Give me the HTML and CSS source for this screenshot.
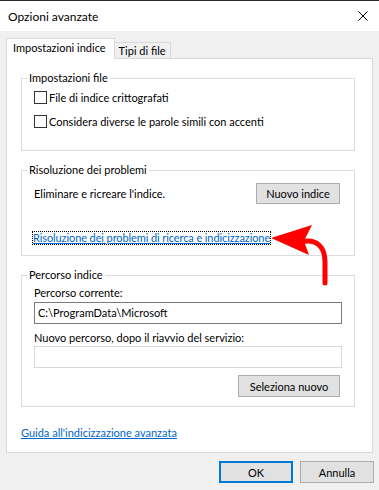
FILE: index.html
```html
<!DOCTYPE html>
<html lang="it">
<head>
  <meta charset="UTF-8" />
  <title>Opzioni avanzate</title>
  <link rel="stylesheet" href="styles.css">
</head>
<body>
  <div class="window">

    <!-- TITLE BAR -->
    <div class="titlebar">
      <span class="title">Opzioni avanzate</span>
      <span class="close">
        <svg width="10" height="10" viewBox="0 0 10 10">
          <path d="M0.5 0.5 L9.5 9.5 M9.5 0.5 L0.5 9.5" stroke="#000" stroke-width="1" fill="none"/>
        </svg>
      </span>
    </div>

    <div class="dialog-body">
      <!-- TABS -->
      <div class="tabs">
        <div class="tab tab-active">Impostazioni indice</div>
        <div class="tab">Tipi di file</div>
      </div>

      <div class="panel">
        <fieldset class="group group-file">
          <legend>Impostazioni file</legend>
          <label class="check"><span class="box"></span>File di indice crittografati</label>
          <label class="check"><span class="box"></span>Considera diverse le parole simili con accenti</label>
        </fieldset>

        <fieldset class="group group-trouble">
          <legend>Risoluzione dei problemi</legend>
          <div class="row">
            <span>Eliminare e ricreare l'indice.</span>
            <button class="btn btn-rebuild">Nuovo indice</button>
          </div>
          <a class="link link-focus" href="#">Risoluzione dei problemi di ricerca e indicizzazione</a>
        </fieldset>

        <fieldset class="group group-path">
          <legend>Percorso indice</legend>
          <div class="field-label">Percorso corrente:</div>
          <div class="textbox">C:\ProgramData\Microsoft</div>
          <div class="field-label field-label-new">Nuovo percorso, dopo il riavvio del servizio:</div>
          <div class="textbox textbox-empty"></div>
          <div class="row row-end">
            <button class="btn btn-select">Seleziona nuovo</button>
          </div>
        </fieldset>

        <a class="link link-help" href="#">Guida all'indicizzazione avanzata</a>
      </div>

      <!-- FOOTER BUTTONS -->
      <div class="footer">
        <button class="btn btn-default">OK</button>
        <button class="btn">Annulla</button>
      </div>
    </div>

    <!-- red annotation arrow -->
    <svg class="arrow" width="70" height="72" viewBox="0 0 70 72">
      <path d="M34 24 C52 20 59 30 59 44 L59 65" stroke="#ff0000" stroke-width="5" fill="none" stroke-linecap="round"/>
      <path d="M5 20 L46 7 L38 23 L43 37 Z" fill="#ff0000"/>
    </svg>
  </div>
</body>
</html>
```

FILE: styles.css
```css
html, body {
  margin: 0;
  padding: 0;
}

body {
  background: #f0f0f0;
  font-family: Lato, "Liberation Sans", sans-serif;
  font-size: 11px;
  color: #000;
}

.window {
  position: relative;
  width: 379px;
  height: 490px;
  border-top: 1px solid #2b2b2b;
  box-sizing: border-box;
  background: #f0f0f0;
}

/* TITLE BAR */
.titlebar {
  height: 30px;
  background: #fff;
  display: flex;
  align-items: center;
  justify-content: space-between;
  padding: 0 11px 0 8px;
}

.title {
  font-size: 12px;
}

.close {
  display: flex;
  margin-top: -1px;
}

.dialog-body {
  padding: 7px 6px 0 6px;
}

/* TABS */
.tabs {
  display: flex;
  align-items: flex-end;
  height: 20px;
}

.tab {
  height: 16px;
  line-height: 15px;
  padding: 0 4px;
  border: 1px solid #d9d9d9;
  border-bottom: none;
  border-left: none;
  box-sizing: border-box;
  background: #f0f0f0;
}

.tab-active {
  position: relative;
  z-index: 1;
  height: 21px;
  margin-bottom: -1px;
  padding: 0 8px 0 6px;
  line-height: 18px;
  border-left: 1px solid #d9d9d9;
  background: #fff;
}

.panel {
  background: #fff;
  border: 1px solid #d9d9d9;
  padding: 11px 0 11px 0;
}

/* GROUP BOXES */
.group {
  margin: 0 17px 0 14px;
  padding: 0 12px;
  border: 1px solid #dcdcdc;
  min-width: 0;
}

.group legend {
  padding: 0 2px;
  margin-left: -7px;
  line-height: 16px;
}

.group-file {
  padding-top: 3px;
  padding-bottom: 21px;
}

.group-trouble {
  margin-top: 11px;
  padding-top: 5px;
  padding-bottom: 11px;
}

.group-path {
  margin-top: 11px;
  padding-top: 2px;
  padding-bottom: 9px;
}

.check {
  display: flex;
  align-items: center;
  height: 16px;
}

.check + .check {
  margin-top: 8px;
}

.box {
  width: 13px;
  height: 13px;
  border: 1px solid #333;
  box-sizing: border-box;
  background: #fff;
  margin-right: 2px;
}

.row {
  display: flex;
  align-items: center;
  justify-content: space-between;
}

.row-end {
  justify-content: flex-end;
  margin-top: 7px;
  padding-right: 2px;
}

/* BUTTONS */
.btn {
  font-family: inherit;
  font-size: 11px;
  color: #000;
  height: 22px;
  padding: 0;
  background: #e1e1e1;
  border: 1px solid #adadad;
  border-radius: 0;
}

.btn-rebuild {
  width: 84px;
  height: 21px;
  margin-right: 2px;
}

.btn-select {
  width: 102px;
}

.btn-default {
  border: 2px solid #0078d7;
}

/* LINKS */
.link {
  color: #0066cc;
  text-decoration: underline;
}

.link-focus {
  display: inline-block;
  margin-top: 28px;
  line-height: 12px;
  letter-spacing: -0.1px;
  outline: 1px dotted #000;
  margin-left: -1px;
}

.link-help {
  display: inline-block;
  margin: 18px 0 0 14px;
  line-height: 16px;
}

/* TEXT FIELDS */
.field-label {
  line-height: 16px;
}

.field-label-new {
  margin-top: 6px;
}

.textbox {
  height: 22px;
  line-height: 20px;
  padding-left: 3px;
  border: 1px solid #7a7a7a;
  box-sizing: border-box;
  background: #fff;
  margin-top: 1px;
}

.textbox-empty {
  border-color: #d9d9d9;
  margin-top: 0;
}

.footer {
  display: flex;
  justify-content: flex-end;
  gap: 7px;
  padding-top: 8px;
  margin-right: -1px;
}

.footer .btn {
  width: 74px;
}

/* annotation overlay */
.arrow {
  position: absolute;
  left: 266px;
  top: 217px;
}
```
